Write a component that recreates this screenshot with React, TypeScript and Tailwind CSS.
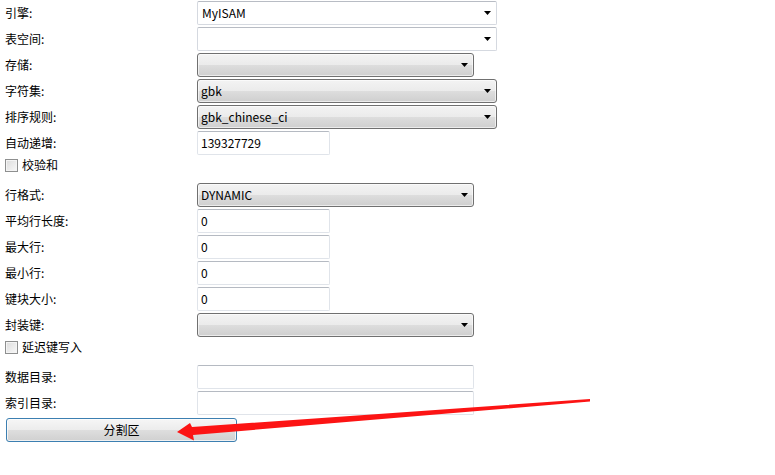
import React from "react";

const font = { fontFamily: '"Noto Sans CJK SC", "Noto Sans", sans-serif' };

function Arrow() {
  return (
    <svg width="7" height="4" viewBox="0 0 7 4" className="shrink-0">
      <polygon points="0,0 7,0 3.5,4" fill="#000" />
    </svg>
  );
}

function WhiteCombo({ value, w }: { value?: string; w: string }) {
  return (
    <div
      className={`${w} h-[24px] flex items-center justify-between pl-[4px] pr-[5px] bg-white border border-[#d5d9e0] border-t-[#b8bcc4] rounded-[2px] text-[12px] text-black`}
    >
      <span>{value ?? ""}</span>
      <Arrow />
    </div>
  );
}

function GradCombo({ value, w }: { value?: string; w: string }) {
  return (
    <div
      className={`${w} h-[24px] flex items-center justify-between pl-[3px] pr-[5px] border border-[#707070] rounded-[3px] bg-[linear-gradient(to_bottom,#f3f3f3_0%,#ebebeb_50%,#dddddd_51%,#cfcfcf_100%)] text-[12px] text-black shadow-[inset_0_0_0_1px_rgba(255,255,255,0.6)]`}
    >
      <span>{value ?? ""}</span>
      <Arrow />
    </div>
  );
}

function TextBox({ value, w }: { value?: string; w: string }) {
  return (
    <div
      className={`${w} h-[24px] flex items-center pl-[3px] bg-white border border-[#e0e4ea] border-t-[#b5bac2] rounded-[2px] text-[12px] text-black`}
    >
      {value ?? ""}
    </div>
  );
}

function Row({ label, children }: { label: string; children: React.ReactNode }) {
  return (
    <div className="h-[26px] flex items-start">
      <div className="w-[192px] h-[24px] flex items-center text-[12px] text-black">{label}</div>
      {children}
    </div>
  );
}

function Check({ label }: { label: string }) {
  return (
    <div className="h-[26px] flex items-start pt-[1px]">
      <div className="flex items-center h-[14px]">
        <div className="w-[13px] h-[13px] border border-[#8e8f8f] bg-[linear-gradient(135deg,#dcdcdc,#f8f8f8)] shadow-[inset_0_0_0_1px_#f4f4f4]" />
        <span className="ml-[4px] text-[12px] text-black">{label}</span>
      </div>
    </div>
  );
}

export default function App() {
  return (
    <div className="relative w-[775px] h-[475px] bg-white overflow-hidden" style={font}>
      <div className="pl-[5px] pt-[1px] flex flex-col">
        <Row label="引擎:">
          <WhiteCombo value="MyISAM" w="w-[300px]" />
        </Row>
        <Row label="表空间:">
          <WhiteCombo w="w-[300px]" />
        </Row>
        <Row label="存储:">
          <GradCombo w="w-[277px]" />
        </Row>
        <Row label="字符集:">
          <GradCombo value="gbk" w="w-[300px]" />
        </Row>
        <Row label="排序规则:">
          <GradCombo value="gbk_chinese_ci" w="w-[300px]" />
        </Row>
        <Row label="自动递增:">
          <TextBox value="139327729" w="w-[133px]" />
        </Row>
        <Check label="校验和" />
        <Row label="行格式:">
          <GradCombo value="DYNAMIC" w="w-[277px]" />
        </Row>
        <Row label="平均行长度:">
          <TextBox value="0" w="w-[133px]" />
        </Row>
        <Row label="最大行:">
          <TextBox value="0" w="w-[133px]" />
        </Row>
        <Row label="最小行:">
          <TextBox value="0" w="w-[133px]" />
        </Row>
        <Row label="键块大小:">
          <TextBox value="0" w="w-[133px]" />
        </Row>
        <Row label="封装键:">
          <GradCombo w="w-[277px]" />
        </Row>
        <Check label="延迟键写入" />
        <Row label="数据目录:">
          <TextBox w="w-[277px]" />
        </Row>
        <Row label="索引目录:">
          <TextBox w="w-[277px]" />
        </Row>
        <div className="pl-[1px] pt-[1px]">
          <button className="w-[231px] h-[24px] flex items-center justify-center border border-[#3c7fb1] rounded-[3px] bg-[linear-gradient(to_bottom,#f6f6f6_0%,#ececec_50%,#dedede_51%,#d0d0d0_100%)] text-[12px] text-black shadow-[inset_0_0_0_1px_rgba(255,255,255,0.7)]">
            分割区
          </button>
        </div>
      </div>
      <svg
        className="absolute left-0 top-0 pointer-events-none"
        width="775"
        height="475"
        viewBox="0 0 775 475"
      >
        <polygon
          points="590,399 590,401.5 193,435 194,440.5 177,432 190,423 192,427"
          fill="#fc1414"
        />
      </svg>
    </div>
  );
}
